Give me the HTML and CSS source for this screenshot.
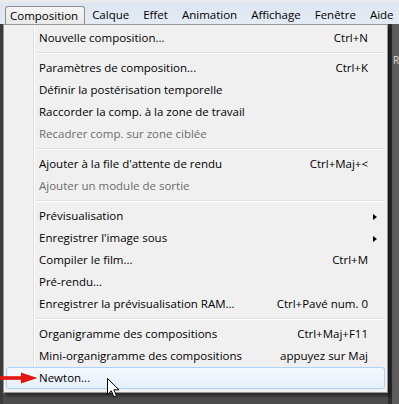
FILE: index.html
```html
<!DOCTYPE html>
<html lang="fr">
<head>
<meta charset="utf-8">
<title>Composition</title>
<link rel="stylesheet" href="styles.css">
</head>
<body>
<div class="menubar">
  <span class="mb-item active">Composition</span>
  <span class="mb-item">Calque</span>
  <span class="mb-item">Effet</span>
  <span class="mb-item">Animation</span>
  <span class="mb-item">Affichage</span>
  <span class="mb-item">Fenêtre</span>
  <span class="mb-item">Aide</span>
</div>
<div class="workspace">
  <div class="ws-left"></div>
  <div class="ws-main"></div>
  <div class="ws-right"><span class="ws-label">R</span></div>
</div>

<div class="menu">
  <div class="item"><span class="label">Nouvelle composition...</span><span class="key">Ctrl+N</span></div>
  <div class="sep"></div>
  <div class="item"><span class="label">Paramètres de composition...</span><span class="key">Ctrl+K</span></div>
  <div class="item"><span class="label">Définir la postérisation temporelle</span></div>
  <div class="item"><span class="label">Raccorder la comp. à la zone de travail</span></div>
  <div class="item disabled"><span class="label">Recadrer comp. sur zone ciblée</span></div>
  <div class="sep"></div>
  <div class="item"><span class="label">Ajouter à la file d'attente de rendu</span><span class="key">Ctrl+Maj+&lt;</span></div>
  <div class="item disabled"><span class="label">Ajouter un module de sortie</span></div>
  <div class="sep"></div>
  <div class="item sub"><span class="label">Prévisualisation</span></div>
  <div class="item sub"><span class="label">Enregistrer l'image sous</span></div>
  <div class="item"><span class="label">Compiler le film...</span><span class="key">Ctrl+M</span></div>
  <div class="item"><span class="label">Pré-rendu...</span></div>
  <div class="item"><span class="label">Enregistrer la prévisualisation RAM...</span><span class="key">Ctrl+Pavé num. 0</span></div>
  <div class="sep"></div>
  <div class="item"><span class="label">Organigramme des compositions</span><span class="key">Ctrl+Maj+F11</span></div>
  <div class="item"><span class="label">Mini-organigramme des compositions</span><span class="key">appuyez sur Maj</span></div>
  <div class="item hover"><span class="label">Newton...</span></div>
</div>

<svg class="red-arrow" width="40" height="12" viewBox="0 0 40 12">
  <rect x="0" y="4.2" width="24" height="3.6" fill="#e5150f"/>
  <polygon points="21,0.5 37.5,6 21,11.5" fill="#e5150f"/>
</svg>

<svg class="cursor" width="14" height="21" viewBox="0 0 14 21">
  <path d="M0.5 0.5 L0.5 16.5 L4.3 12.8 L6.9 18.9 L9.4 17.8 L6.9 11.8 L12 11.8 Z" fill="#fff" stroke="#000" stroke-width="1" stroke-linejoin="miter"/>
</svg>
</body>
</html>
```

FILE: styles.css
```css
html, body {
  margin: 0;
  padding: 0;
}
body {
  width: 399px;
  height: 404px;
  overflow: hidden;
  position: relative;
  background: #4a4a4a;
  font-family: "Open Sans", "Noto Sans", sans-serif;
  font-size: 11.5px;
  color: #000;
}
.menubar {
  height: 21px;
  border-top: 3px solid #e9eaec;
  background: linear-gradient(#dde6f1, #e4ebf4);
  display: flex;
  padding-left: 3px;
  white-space: nowrap;
}
.mb-item {
  height: 18px;
  line-height: 18px;
  margin-top: 3px;
  padding: 0 7px;
  box-sizing: border-box;
}
.mb-item.active {
  border: 1px solid #8e8f8f;
  border-bottom: none;
  border-radius: 3px 3px 0 0;
  background: linear-gradient(#f4f4f4, #e9e9e9);
  margin-left: 2px;
  padding: 0 6px 0 4px;
  line-height: 17px;
}
.workspace {
  display: flex;
  height: 380px;
}
.ws-left {
  width: 3px;
  background: #3b3b3b;
}
.ws-main {
  flex: 1;
  background: #4b4b4b;
}
.ws-right {
  width: 7px;
  background: #5d5d5d;
  border-left: 4px solid #2e2e2e;
  color: #ddd;
  font-size: 10px;
  line-height: 18px;
  overflow: hidden;
}
.ws-label {
  display: block;
  margin-top: 27px;
  padding-left: 1px;
}
.menu {
  position: absolute;
  left: 3px;
  top: 24px;
  width: 379px;
  border: 1px solid #979797;
  background: #f0f0f0;
  padding: 2px 2px 3px 2px;
  box-shadow: 3px 3px 3px rgba(0, 0, 0, 0.45);
}
.menu::before {
  content: "";
  position: absolute;
  left: 29px;
  top: 2px;
  bottom: 3px;
  width: 1px;
  background: #e2e3e3;
  border-right: 1px solid #fff;
}
.item {
  position: relative;
  height: 22px;
  line-height: 22px;
  display: flex;
  justify-content: space-between;
  padding: 0 16px 0 32px;
  white-space: nowrap;
  box-sizing: border-box;
  border: 1px solid transparent;
  border-radius: 3px;
}
.item .label, .item .key {
  margin-top: -1px;
}
.item.disabled {
  color: #6d6d6d;
}
.item.sub::after {
  content: "";
  position: absolute;
  right: 7px;
  top: 8px;
  border-left: 4px solid #000;
  border-top: 3px solid transparent;
  border-bottom: 3px solid transparent;
}
.item.hover {
  border-color: #a9d2f6;
  background: linear-gradient(#f3f8fd, #e6f0fa);
}
.sep {
  height: 8px;
  position: relative;
}
.sep::after {
  content: "";
  position: absolute;
  left: 29px;
  right: 0;
  top: 3px;
  height: 1px;
  background: #e0e0e0;
  border-bottom: 1px solid #fff;
}
.red-arrow {
  position: absolute;
  left: 0;
  top: 372px;
}
.cursor {
  position: absolute;
  left: 107px;
  top: 378px;
}
```
